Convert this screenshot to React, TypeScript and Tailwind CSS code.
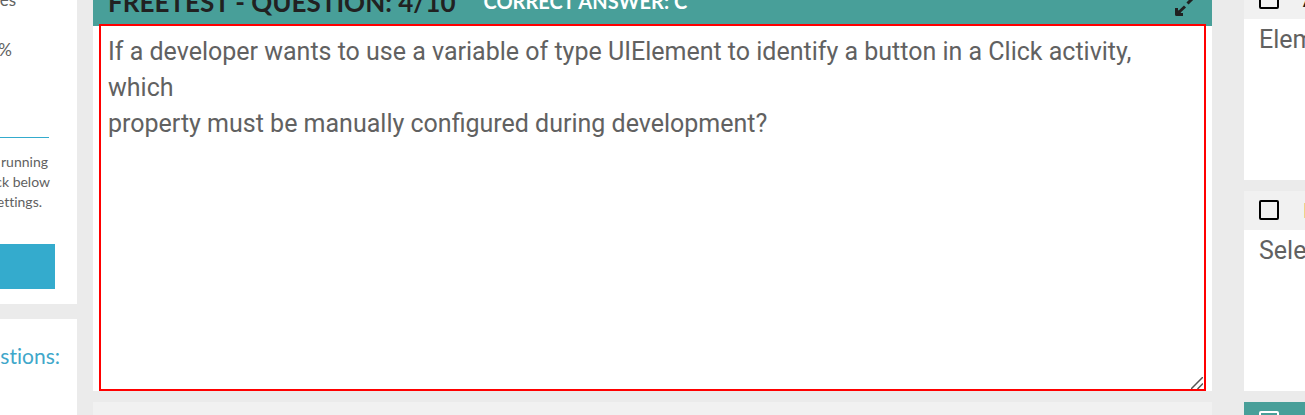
import React from "react";

const question =
  "If a developer wants to use a variable of type UIElement to identify a button in a Click activity, which\nproperty must be manually configured during development?";

function ExpandIcon() {
  return (
    <svg viewBox="0 0 24 26" className="h-[26px] w-6" fill="none" stroke="#212121" strokeWidth="3" aria-hidden="true">
      <path d="M3.500 8v6.500H10" strokeLinejoin="round" />
      <path d="M3 8v7h7z" fill="#212121" stroke="none" />
      <path d="M4 14 12 6.500M14.500 3.500 21-3" />
      <path d="M14-9h8v8z" fill="#212121" stroke="none" />
    </svg>
  );
}

function ResizeGrip() {
  return (
    <svg viewBox="0 0 12 12" className="pointer-events-none absolute bottom-0.5 right-[9px] size-3" stroke="#555" strokeWidth="1.5" aria-hidden="true">
      <path d="M0 12 12 0M6.500 12 12 6.500" />
    </svg>
  );
}

function Option({ letter, tone, body, active }: { letter: string; tone: string; body?: string; active?: boolean }) {
  return (
    <section className={"h-[200px] shrink-0 " + (active ? "bg-[#489f99]" : "bg-white")}>
      <label className={"flex h-[39px] items-center gap-6 pb-0.5 pl-[15px] " + (active ? "bg-[#489f99]" : "bg-[#f1f1f1]")}>
        <input
          type="checkbox"
          className={"size-5 shrink-0 appearance-none rounded-[2px] border-2 " + (active ? "border-white" : "border-black")}
        />
        <span className={"font-['Lato',sans-serif] text-[21px] font-bold " + tone}>{letter}</span>
      </label>
      {body && <p className="pl-[15px] pt-[3px] text-[25px] leading-9 text-[#616161]">{body}</p>}
    </section>
  );
}

export default function App() {
  return (
    <div className="flex h-screen overflow-hidden bg-[#ebebeb] font-['Roboto',sans-serif]">
      <aside className="flex w-[77px] shrink-0 flex-col gap-[15px] overflow-hidden font-['Lato',sans-serif] text-[#616161] [font-variant-ligatures:none]">
        <section className="h-[304px] shrink-0 bg-white">
          <div className="mr-7 flex h-[138px] flex-col items-start border-b border-[#34abcd]">
            <div className="flex h-2.5 w-4 items-end justify-end text-[17px] leading-5">es</div>
            <div className="mt-7 flex w-3 justify-end text-[17px] leading-6">%</div>
          </div>
          <p className="mt-3.5 flex h-[62px] flex-col text-sm leading-5">
            <span className="flex w-12 justify-end">running</span>
            <span className="flex w-[50px] justify-end whitespace-nowrap">ck below</span>
            <span className="flex w-[42px] justify-end">ettings.</span>
          </p>
          <button type="button" aria-label="Apply settings" className="mt-[30px] block h-[45px] w-[55px] bg-[#34abcd]" />
        </section>
        <section className="flex-1 bg-white pt-[23px]">
          <h2 className="flex w-[60px] justify-end text-[21px] leading-7 text-[#40a7ca]">stions:</h2>
        </section>
      </aside>

      <main className="ml-4 flex min-w-0 flex-1 flex-col">
        <section className="bg-white">
          <header className="flex h-[26px] items-end overflow-hidden bg-[#489f99] px-[15px] font-['Lato',sans-serif] font-bold whitespace-nowrap">
            <h1 className="pb-2.5 text-[26px] leading-7 text-[#212121]">FREETEST - QUESTION: 4/10</h1>
            <span className="ml-7 pb-[13px] text-xl leading-6 text-white">CORRECT ANSWER: C</span>
            <button type="button" aria-label="Expand" className="ml-auto">
              <ExpandIcon />
            </button>
          </header>
          <div className="relative -mt-0.5 px-1.5">
            <textarea
              aria-label="Question"
              defaultValue={question}
              className="block h-[367px] w-full border-2 border-[#ff0000] bg-white px-[7px] py-2 text-[25px] leading-9 text-[#616161] outline-none [&::-webkit-resizer]:hidden"
            />
            <ResizeGrip />
          </div>
        </section>
        <section className="mt-[11px] flex-1 bg-[#f1f1f1]" />
      </main>

      <aside className="-mt-5 ml-8 flex w-[61px] shrink-0 flex-col gap-[11px] overflow-hidden whitespace-nowrap">
        <Option letter="A." tone="text-[#212121]" body="Element" />
        <Option letter="B." tone="text-[#dfa65a]" body="Selector" />
        <Option letter="C." tone="text-white" active />
      </aside>
    </div>
  );
}
